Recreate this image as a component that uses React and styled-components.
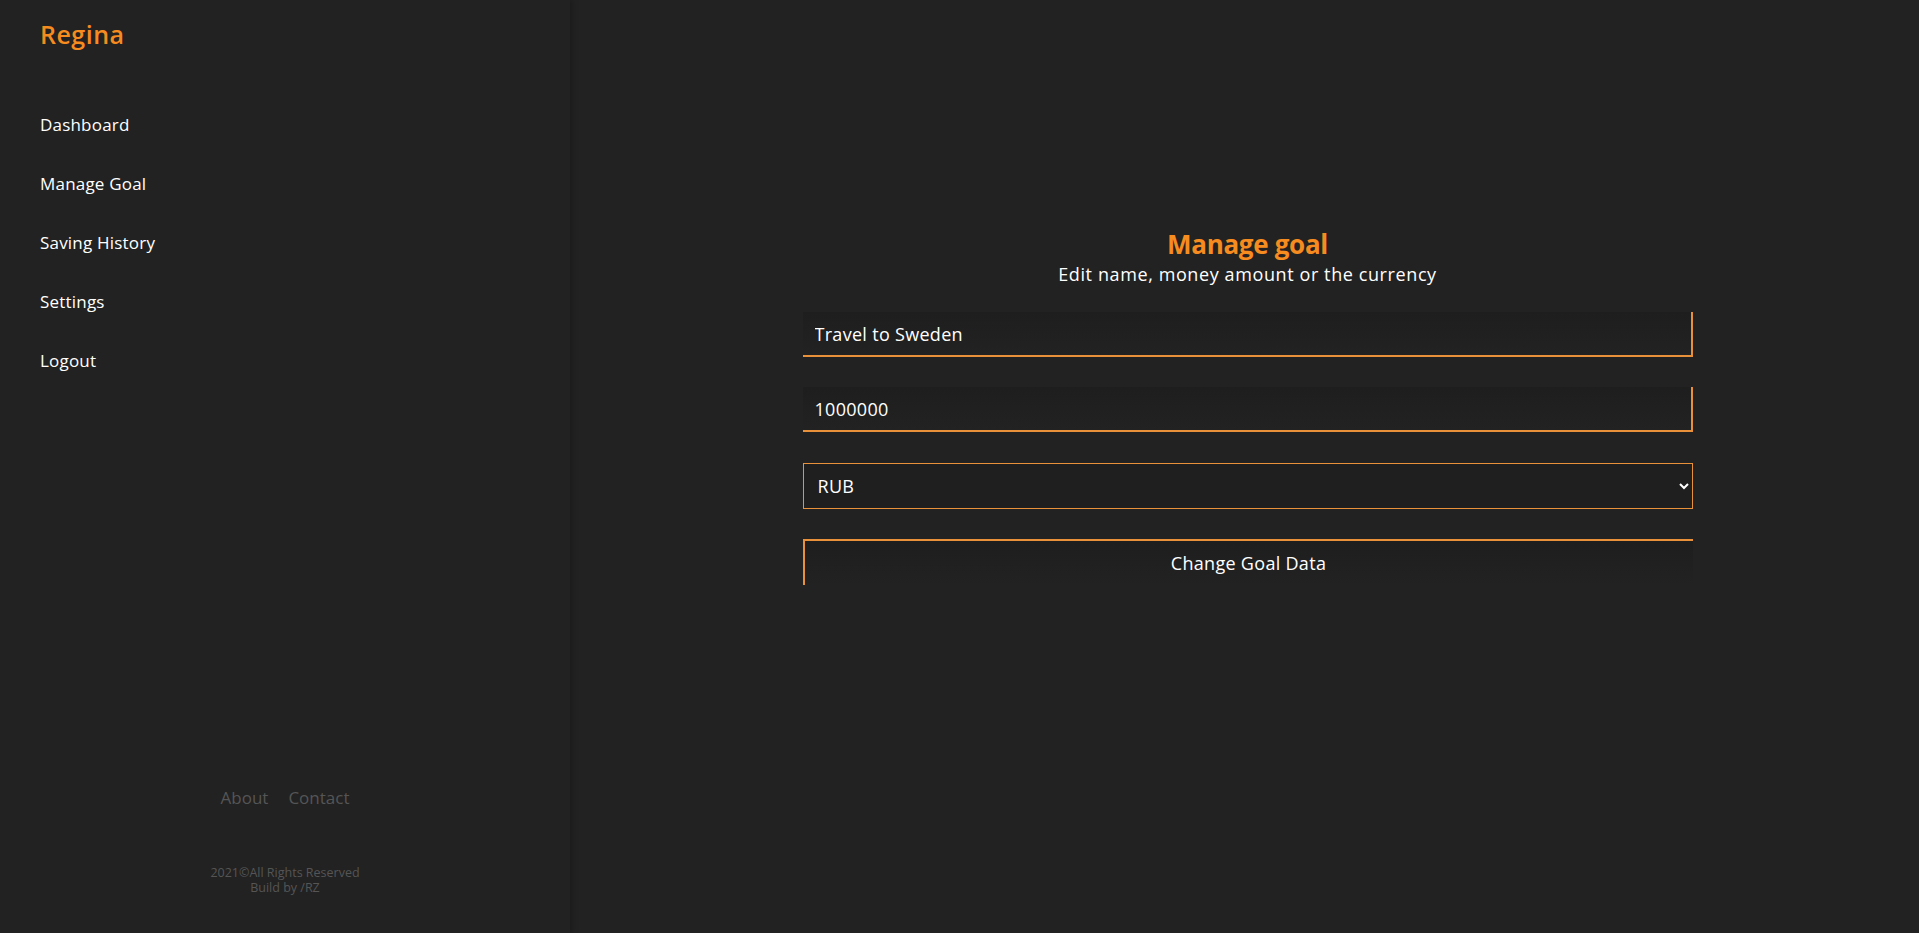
import React, { useState } from 'react';
import styled, { createGlobalStyle } from 'styled-components';

const GlobalStyle = createGlobalStyle`
  * { box-sizing: border-box; }
  html, body {
    margin: 0;
    padding: 0;
    background: #222222;
    font-family: 'Open Sans', 'Liberation Sans', sans-serif;
  }
`;

const Layout = styled.div`
  display: flex;
  min-height: 933px;
  background: #222222;
`;

const Sidebar = styled.aside`
  width: 570px;
  flex-shrink: 0;
  display: flex;
  flex-direction: column;
  padding: 18px 0 0 40px;
  box-shadow: 2px 0 6px rgba(0, 0, 0, 0.25);
  position: relative;
  z-index: 1;
`;

const Logo = styled.div`
  color: #f68b1f;
  font-size: 25px;
  font-weight: 600;
  letter-spacing: 0.5px;
  height: 32px;
  line-height: 32px;
`;

const Nav = styled.nav`
  display: flex;
  flex-direction: column;
  gap: 35px;
  margin-top: 63px;
`;

const NavLink = styled.a`
  color: #ffffff;
  font-size: 17px;
  line-height: 24px;
  letter-spacing: 0.2px;
  text-decoration: none;
  cursor: pointer;
  &:hover { color: #f68b1f; }
`;

const SideFooter = styled.footer`
  margin-top: auto;
  margin-left: -40px;
  padding-bottom: 38px;
  display: flex;
  flex-direction: column;
  align-items: center;
  gap: 56px;
`;

const FooterLinks = styled.div`
  display: flex;
  gap: 20px;
`;

const FooterLink = styled.a`
  color: #555555;
  font-size: 17px;
  text-decoration: none;
`;

const Copy = styled.div`
  color: #555555;
  font-size: 12.5px;
  line-height: 15px;
  text-align: center;
`;

const Main = styled.main`
  flex: 1;
  display: flex;
  justify-content: center;
  padding: 225px 0 0 6px;
`;

const Form = styled.form`
  width: 890px;
  display: flex;
  flex-direction: column;
`;

const Title = styled.h1`
  margin: 0;
  text-align: center;
  color: #f68b1f;
  font-size: 26px;
  font-weight: 700;
  letter-spacing: -0.3px;
  line-height: 38px;
`;

const Subtitle = styled.p`
  margin: -2px 0 0;
  text-align: center;
  color: #ffffff;
  font-size: 18px;
  letter-spacing: 0.6px;
  line-height: 26px;
`;

const Field = styled.input`
  height: 45px;
  margin-top: ${p => p.$top}px;
  background: linear-gradient(#1e1e1e, #222222);
  border: none;
  border-right: 2px solid #e8913a;
  border-bottom: 2px solid #e8913a;
  color: #ffffff;
  font-family: inherit;
  font-size: 18px;
  letter-spacing: 0.3px;
  padding: 0 12px;
  outline: none;
`;

const Select = styled.select`
  height: 46px;
  margin-top: 31px;
  background: #1f1f1f;
  border: 1px solid #e8913a;
  color: #ffffff;
  font-family: inherit;
  font-size: 18px;
  letter-spacing: 0.3px;
  padding: 0 10px;
  outline: none;
`;

const SubmitButton = styled.button`
  height: 46px;
  margin-top: 30px;
  background: linear-gradient(#1e1e1e, #222222);
  border: none;
  border-top: 2px solid #e8913a;
  border-left: 2px solid #e8913a;
  color: #ffffff;
  font-family: inherit;
  font-size: 18px;
  letter-spacing: 0.3px;
  cursor: pointer;
`;

export default function App() {
  const [name, setName] = useState('Travel to Sweden');
  const [amount, setAmount] = useState('1000000');
  const [currency, setCurrency] = useState('RUB');

  return (
    <Layout>
      <GlobalStyle />
      <Sidebar>
        <Logo>Regina</Logo>
        <Nav>
          <NavLink>Dashboard</NavLink>
          <NavLink>Manage Goal</NavLink>
          <NavLink>Saving History</NavLink>
          <NavLink>Settings</NavLink>
          <NavLink>Logout</NavLink>
        </Nav>
        <SideFooter>
          <FooterLinks>
            <FooterLink>About</FooterLink>
            <FooterLink>Contact</FooterLink>
          </FooterLinks>
          <Copy>
            2021©All Rights Reserved
            <br />
            Build by /RZ
          </Copy>
        </SideFooter>
      </Sidebar>
      <Main>
        <Form onSubmit={e => e.preventDefault()}>
          <Title>Manage goal</Title>
          <Subtitle>Edit name, money amount or the currency</Subtitle>
          <Field $top={25} value={name} onChange={e => setName(e.target.value)} />
          <Field $top={30} value={amount} onChange={e => setAmount(e.target.value)} />
          <Select value={currency} onChange={e => setCurrency(e.target.value)}>
            <option>RUB</option>
            <option>USD</option>
            <option>EUR</option>
          </Select>
          <SubmitButton type="submit">Change Goal Data</SubmitButton>
        </Form>
      </Main>
    </Layout>
  );
}
